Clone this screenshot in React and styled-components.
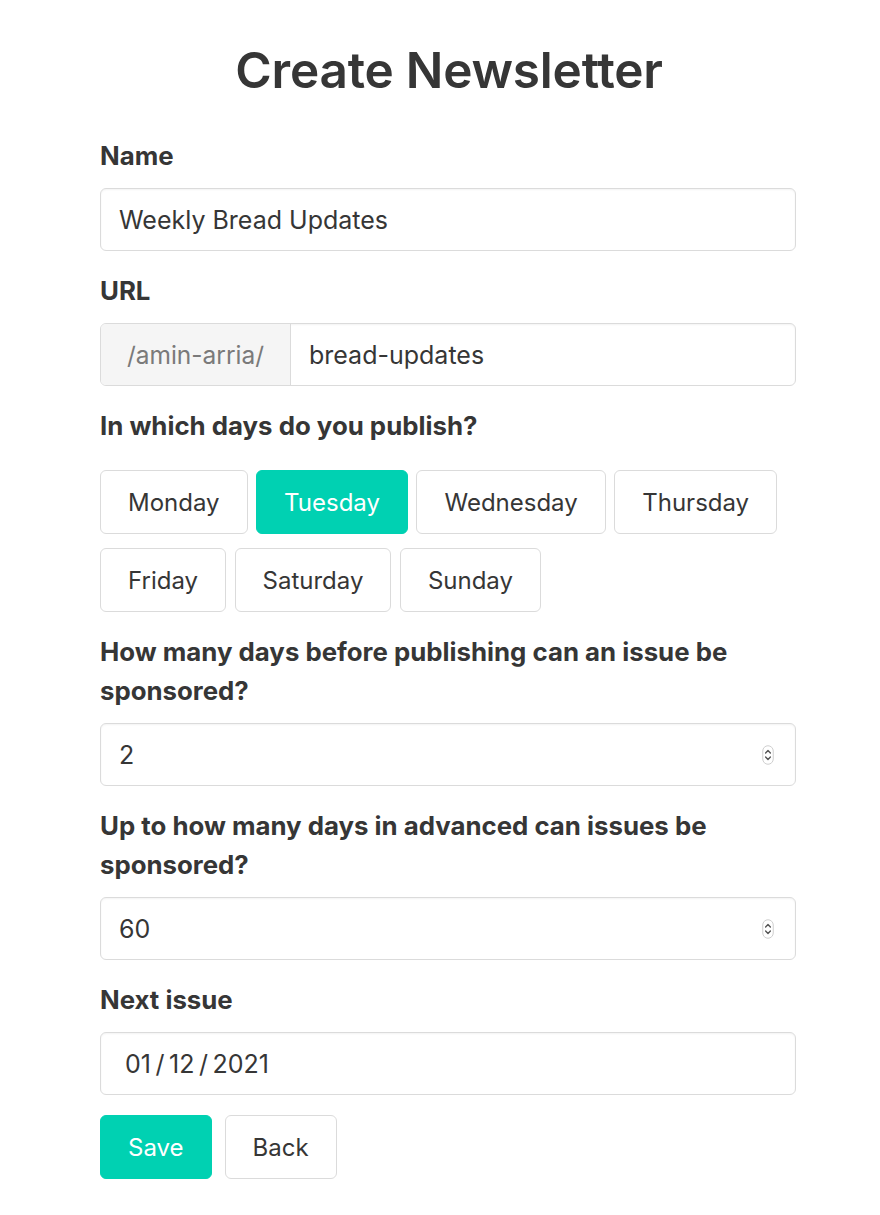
import React from "react";
import styled, { createGlobalStyle, css } from "styled-components";

const Global = createGlobalStyle`
  html, body { margin: 0; padding: 0; background: #fff; }
  body { font-family: Inter, "Noto Sans", sans-serif; color: #363636; }
  * { box-sizing: border-box; }
`;

const Page = styled.main`
  width: 880px;
  padding: 41px 84px 40px 100px;
`;

const Title = styled.h1`
  margin: 0 0 37px;
  text-align: center;
  font-size: 49.5px;
  line-height: 58px;
  font-weight: 600;
  color: #363636;
  letter-spacing: -0.2px;
  padding-left: 2px;
`;

const Form = styled.form`
  display: flex;
  flex-direction: column;
  gap: 20px;
`;

const Field = styled.div`
  display: flex;
  flex-direction: column;
  gap: ${(p) => (p.$wide ? "25px" : "13px")};
`;

const Label = styled.label`
  font-size: 25.8px;
  line-height: 39px;
  font-weight: 700;
  color: #363636;
`;

const boxStyle = css`
  height: 63px;
  border: 1.5px solid #dbdbdb;
  border-radius: 6px;
  background: #fff;
  box-shadow: inset 0 1px 2px rgba(10, 10, 10, 0.05);
`;

const TextInput = styled.input`
  ${boxStyle};
  width: 100%;
  padding: 0 18px 0 ${(p) => p.$pad || "18px"};
  font: inherit;
  font-size: 25px;
  color: #363636;
  outline: none;
`;

const Group = styled.div`
  ${boxStyle};
  display: flex;
  align-items: stretch;
  overflow: hidden;
`;

const Addon = styled.span`
  flex: none;
  display: flex;
  align-items: center;
  justify-content: center;
  width: 190px;
  white-space: nowrap;
  background: #f5f5f5;
  border-right: 1.5px solid #dbdbdb;
  color: #7a7a7a;
  font-size: 24.5px;
`;

const BareInput = styled.input`
  flex: 1;
  min-width: 0;
  border: none;
  background: transparent;
  padding: 0 18px;
  font: inherit;
  font-size: 25px;
  color: #363636;
  outline: none;
  -moz-appearance: textfield;
  &::-webkit-inner-spin-button,
  &::-webkit-outer-spin-button { -webkit-appearance: none; margin: 0; }
`;

const Stepper = styled.svg`
  align-self: center;
  margin-right: 21px;
  flex: none;
`;

const Days = styled.div`
  display: flex;
  flex-wrap: wrap;
  column-gap: 8.5px;
  row-gap: 14px;
  width: 690px;
`;

const Button = styled.button`
  height: 64px;
  padding: 0 ${(p) => p.$px || "27px"};
  border-radius: 6px;
  font: inherit;
  font-size: 24px;
  cursor: pointer;
  ${(p) =>
    p.$primary
      ? css`
          background: #00d1b2;
          border: 1.5px solid #00d1b2;
          color: #fff;
        `
      : css`
          background: #fff;
          border: 1.5px solid #dbdbdb;
          color: #363636;
        `}
`;

const Actions = styled.div`
  display: flex;
  gap: 13px;
`;

const StepIcon = () => (
  <Stepper width="12" height="20" viewBox="0 0 12 20">
    <rect x="0.75" y="0.75" width="10.5" height="18.5" rx="5.25" fill="#fff" stroke="#cfcfcf" strokeWidth="1" />
    <path d="M3.6 8 L6 5.6 L8.4 8" fill="none" stroke="#555" strokeWidth="1.4" strokeLinecap="round" strokeLinejoin="round" />
    <path d="M3.6 12 L6 14.4 L8.4 12" fill="none" stroke="#555" strokeWidth="1.4" strokeLinecap="round" strokeLinejoin="round" />
  </Stepper>
);

const days = ["Monday", "Tuesday", "Wednesday", "Thursday", "Friday", "Saturday", "Sunday"];

export default function App() {
  return (
    <>
      <Global />
      <Page>
        <Title>Create Newsletter</Title>
        <Form onSubmit={(e) => e.preventDefault()}>
          <Field>
            <Label>Name</Label>
            <TextInput defaultValue="Weekly Bread Updates" />
          </Field>
          <Field>
            <Label>URL</Label>
            <Group>
              <Addon>/amin-arria/</Addon>
              <BareInput defaultValue="bread-updates" />
            </Group>
          </Field>
          <Field $wide>
            <Label>In which days do you publish?</Label>
            <Days>
              {days.map((d) => (
                <Button type="button" key={d} $primary={d === "Tuesday"}>
                  {d}
                </Button>
              ))}
            </Days>
          </Field>
          <Field>
            <Label>How many days before publishing can an issue be sponsored?</Label>
            <Group>
              <BareInput type="number" defaultValue="2" />
              <StepIcon />
            </Group>
          </Field>
          <Field>
            <Label>Up to how many days in advanced can issues be sponsored?</Label>
            <Group>
              <BareInput type="number" defaultValue="60" />
              <StepIcon />
            </Group>
          </Field>
          <Field>
            <Label>Next issue</Label>
            <TextInput $pad="24px" defaultValue={"01\u2009/\u200912\u2009/\u20092021"} />
          </Field>
          <Actions>
            <Button type="submit" $primary $px="27px">Save</Button>
            <Button type="button" $px="27px">Back</Button>
          </Actions>
        </Form>
      </Page>
    </>
  );
}
